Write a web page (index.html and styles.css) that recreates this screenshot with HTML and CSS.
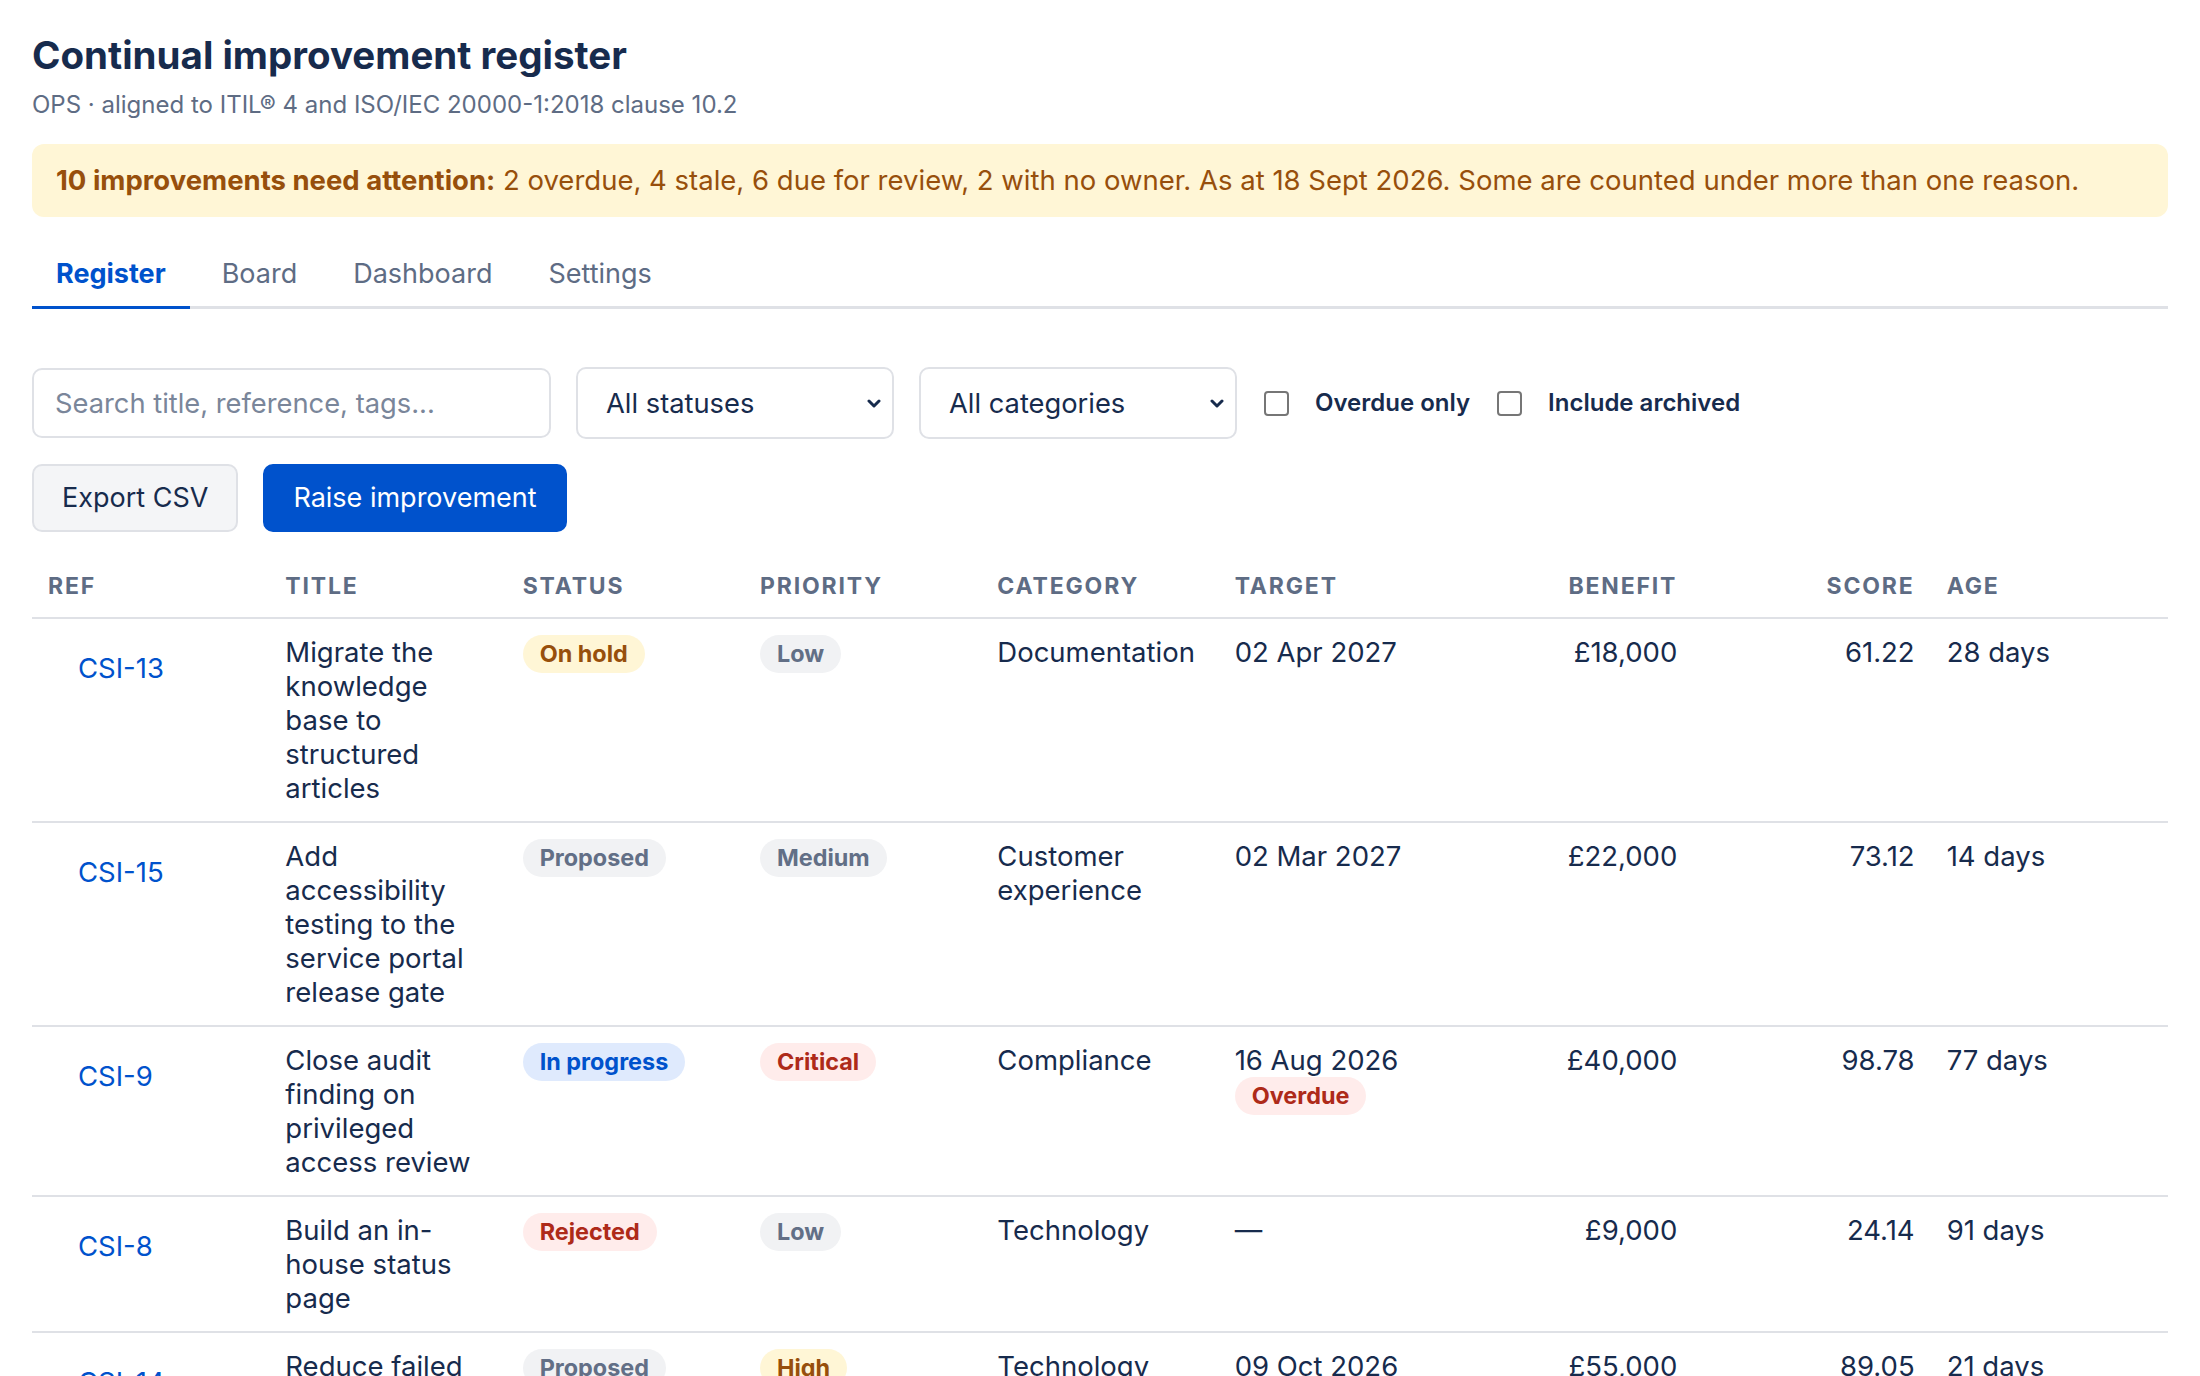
FILE: index.html
```html
<!DOCTYPE html>
<html lang="en">
<head>
    <meta charset="UTF-8">
    <meta name="viewport" content="width=device-width, initial-scale=1.0">
    <title>Continual improvement register</title>
    <link rel="stylesheet" href="styles.css">
</head>
<body>
    <div class="page">
        <div class="page-head">
            <h1>Continual improvement register</h1>
            <p class="subtitle">OPS · aligned to ITIL® 4 and ISO/IEC 20000-1:2018 clause 10.2</p>
        </div>

        <div class="alert">
            <strong>10 improvements need attention:</strong> 2 overdue, 4 stale, 6 due for review, 2 with no owner. As at 18 Sept 2026. Some are counted under more than one reason.
        </div>

        <nav class="tabs">
            <a href="#" class="tab active">Register</a>
            <a href="#" class="tab">Board</a>
            <a href="#" class="tab">Dashboard</a>
            <a href="#" class="tab">Settings</a>
        </nav>

        <div class="filters">
            <input type="text" class="search" placeholder="Search title, reference, tags...">
            <div class="select-wrap">
                <select>
                    <option>All statuses</option>
                    <option>Proposed</option>
                    <option>In progress</option>
                    <option>On hold</option>
                    <option>Rejected</option>
                </select>
                <svg class="chevron" viewBox="0 0 14 9" width="14" height="9"><polyline points="2,2 7,7 12,2" fill="none" stroke="#172b4d" stroke-width="3" stroke-linecap="round" stroke-linejoin="round"/></svg>
            </div>
            <div class="select-wrap">
                <select>
                    <option>All categories</option>
                    <option>Compliance</option>
                    <option>Customer experience</option>
                    <option>Documentation</option>
                    <option>Technology</option>
                </select>
                <svg class="chevron" viewBox="0 0 14 9" width="14" height="9"><polyline points="2,2 7,7 12,2" fill="none" stroke="#172b4d" stroke-width="3" stroke-linecap="round" stroke-linejoin="round"/></svg>
            </div>
            <label class="check"><input type="checkbox"> Overdue only</label>
            <label class="check"><input type="checkbox"> Include archived</label>
        </div>

        <div class="actions">
            <button class="btn">Export CSV</button>
            <button class="btn primary">Raise improvement</button>
        </div>

        <table class="register">
            <thead>
                <tr>
                    <th>Ref</th>
                    <th>Title</th>
                    <th>Status</th>
                    <th>Priority</th>
                    <th>Category</th>
                    <th>Target</th>
                    <th class="num">Benefit</th>
                    <th class="num">Score</th>
                    <th>Age</th>
                </tr>
            </thead>
            <tbody>
                <tr>
                    <td><button class="ref-link">CSI-13</button></td>
                    <td>Migrate the knowledge base to structured articles</td>
                    <td><span class="badge amber">On hold</span></td>
                    <td><span class="badge grey">Low</span></td>
                    <td>Documentation</td>
                    <td>02 Apr 2027</td>
                    <td class="num">£18,000</td>
                    <td class="num">61.22</td>
                    <td>28 days</td>
                </tr>
                <tr>
                    <td><button class="ref-link">CSI-15</button></td>
                    <td>Add accessibility testing to the service portal release gate</td>
                    <td><span class="badge grey">Proposed</span></td>
                    <td><span class="badge grey">Medium</span></td>
                    <td>Customer experience</td>
                    <td>02 Mar 2027</td>
                    <td class="num">£22,000</td>
                    <td class="num">73.12</td>
                    <td>14 days</td>
                </tr>
                <tr>
                    <td><button class="ref-link">CSI-9</button></td>
                    <td>Close audit finding on privileged access review</td>
                    <td><span class="badge blue">In progress</span></td>
                    <td><span class="badge red">Critical</span></td>
                    <td>Compliance</td>
                    <td>
                        <div class="target">
                            <span>16 Aug 2026</span>
                            <span class="badge red">Overdue</span>
                        </div>
                    </td>
                    <td class="num">£40,000</td>
                    <td class="num">98.78</td>
                    <td>77 days</td>
                </tr>
                <tr>
                    <td><button class="ref-link">CSI-8</button></td>
                    <td>Build an in-house status page</td>
                    <td><span class="badge red">Rejected</span></td>
                    <td><span class="badge grey">Low</span></td>
                    <td>Technology</td>
                    <td>—</td>
                    <td class="num">£9,000</td>
                    <td class="num">24.14</td>
                    <td>91 days</td>
                </tr>
                <tr>
                    <td><button class="ref-link">CSI-14</button></td>
                    <td>Reduce failed changes with automated pre-release checks</td>
                    <td><span class="badge grey">Proposed</span></td>
                    <td><span class="badge amber">High</span></td>
                    <td>Technology</td>
                    <td>09 Oct 2026</td>
                    <td class="num">£55,000</td>
                    <td class="num">89.05</td>
                    <td>21 days</td>
                </tr>
            </tbody>
        </table>
    </div>
</body>
</html>
```

FILE: styles.css
```css
html {
    overflow: hidden;
}

body {
    font-family: Inter, "Noto Sans", sans-serif;
    margin: 0;
    padding: 0;
    background: #fff;
    color: #172b4d;
    font-size: 27.5px;
    line-height: 34px;
}

.page {
    padding: 32px 32px 0;
}

.page-head h1 {
    margin: 0;
    font-size: 38.5px;
    line-height: 46px;
    font-weight: 700;
    color: #172b4d;
}

.subtitle {
    margin: 10px 0 0;
    font-size: 24px;
    color: #5e6c84;
}

.alert {
    margin-top: 22px;
    background: #fff6d6;
    color: #974f0c;
    border-radius: 12px;
    padding: 20px 24px;
    font-size: 27.5px;
    line-height: 33px;
}

.alert strong {
    font-weight: 700;
}

.tabs {
    display: flex;
    gap: 8px;
    margin-top: 24px;
    border-bottom: 3px solid #dfe1e6;
}

.tab {
    padding: 16px 24px 15px;
    margin-bottom: -3px;
    border-bottom: 3px solid transparent;
    color: #5e6c84;
    text-decoration: none;
    font-size: 27px;
}

.tab.active {
    color: #0052cc;
    font-weight: 700;
    border-bottom-color: #0052cc;
}

.filters {
    display: flex;
    align-items: center;
    gap: 25px;
    margin-top: 58px;
}

.search,
.select-wrap select {
    font-family: inherit;
    font-size: 27.3px;
    color: #172b4d;
    border: 2px solid #dfe1e6;
    border-radius: 10px;
    background: #fff;
    box-sizing: border-box;
}

.search {
    width: 519px;
    height: 70px;
    padding: 0 21px;
}

.search::placeholder {
    color: #7a869a;
}

.select-wrap {
    position: relative;
}

.select-wrap select {
    appearance: none;
    width: 318px;
    height: 72px;
    padding: 0 40px 0 28px;
}

.chevron {
    position: absolute;
    right: 13px;
    top: 32px;
    pointer-events: none;
}

.check {
    display: flex;
    align-items: center;
    gap: 26px;
    font-size: 24px;
    font-weight: 600;
}

.check input {
    appearance: none;
    width: 25px;
    height: 25px;
    margin: 0 0 0 2px;
    border: 2px solid #767676;
    border-radius: 4px;
    background: #fff;
}

.actions {
    display: flex;
    gap: 25px;
    margin-top: 25px;
}

.btn {
    font-family: inherit;
    font-size: 27px;
    line-height: 34px;
    padding: 15px 28px;
    border: 2px solid #dfe1e6;
    border-radius: 10px;
    background: #f4f5f7;
    color: #172b4d;
    cursor: pointer;
}

.btn.primary {
    background: #0052cc;
    border-color: #0052cc;
    color: #fff;
}

.register {
    width: 100%;
    margin-top: 23px;
    border-collapse: collapse;
    table-layout: fixed;
}

.register th {
    text-align: left;
    padding: 16px;
    font-size: 23px;
    line-height: 30px;
    font-weight: 700;
    letter-spacing: 0.08em;
    text-transform: uppercase;
    color: #5e6c84;
    border-bottom: 2px solid #dfe1e6;
}

.register td {
    padding: 16px;
    vertical-align: top;
    border-bottom: 2px solid #dfe1e6;
}

.register .num {
    text-align: right;
}

.ref-link {
    font-family: inherit;
    font-size: 27.5px;
    line-height: 34px;
    padding: 16px 30px;
    margin: 0;
    border: none;
    background: none;
    color: #0052cc;
    cursor: pointer;
}

.target {
    display: flex;
    flex-direction: column;
    align-items: flex-start;
}

.badge {
    display: inline-block;
    padding: 6px 17px;
    border-radius: 999px;
    font-size: 23.4px;
    line-height: 26px;
    font-weight: 700;
}

.badge.grey {
    background: #f1f2f4;
    color: #626f86;
}

.badge.amber {
    background: #fff6d6;
    color: #974f0c;
}

.badge.blue {
    background: #dfeafd;
    color: #0052cc;
}

.badge.red {
    background: #ffeceb;
    color: #ae2a19;
}
```
